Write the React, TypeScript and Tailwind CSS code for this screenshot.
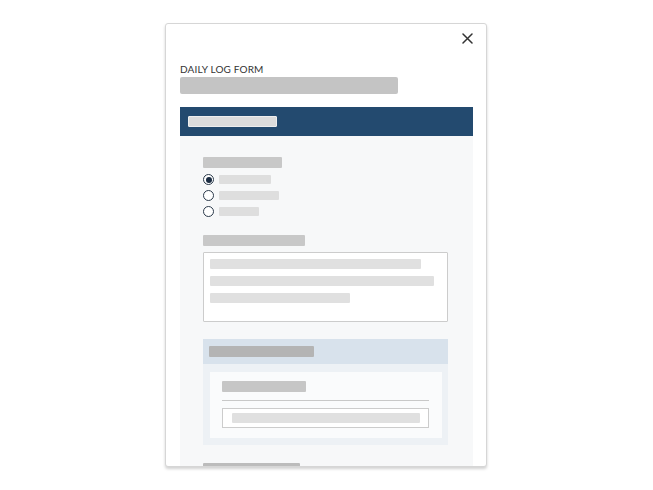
import React from "react";

function Bar({ w, h, c, cls = "" }: { w: string; h: string; c: string; cls?: string }) {
  return <div className={`${w} ${h} ${c} ${cls} rounded-[1px]`} />;
}

function Radio({ checked }: { checked?: boolean }) {
  return (
    <div className="w-[11px] h-[11px] rounded-full border border-[#2b3a4b] bg-white flex items-center justify-center shrink-0">
      {checked && <div className="w-[6px] h-[6px] rounded-full bg-[#1b2c42]" />}
    </div>
  );
}

export default function App() {
  return (
    <div className="w-[653px] h-[490px] bg-white pt-[23px] pl-[165px]" style={{ fontFamily: "Lato, 'Open Sans', sans-serif" }}>
      <div className="w-[322px] h-[444px] border border-[#d6d6d6] rounded-[3px] shadow-[0_2px_3px_rgba(0,0,0,0.18)] overflow-hidden bg-white pl-[14px] pr-[13px]">
        <div className="flex justify-end pt-[9px]">
          <svg width="11" height="11" viewBox="0 0 11 11">
            <path d="M1 1L10 10M10 1L1 10" stroke="#333" strokeWidth="1.5" strokeLinecap="round" />
          </svg>
        </div>
        <div className="mt-[19px] text-[10px] leading-[12px] tracking-[0.15px] text-[#333] font-normal">DAILY LOG FORM</div>
        <Bar w="w-[218px]" h="h-[17px]" c="bg-[#c4c4c4]" cls="mt-[2px] rounded-[2px]" />
        <div className="mt-[13px] h-[29px] bg-[#234a6f] flex items-center pl-[8px]">
          <div className="w-[89px] h-[11px] bg-[#dcdcdc] border border-[#eeeeee] rounded-[1px]" />
        </div>
        <div className="bg-[#f7f8f9] pl-[23px] pr-[26px] pt-[21px] h-[340px]">
          <Bar w="w-[79px]" h="h-[11px]" c="bg-[#c8c8c8]" />
          <div className="mt-[6px] flex flex-col gap-[5px]">
            <div className="flex items-center gap-[5px] h-[11px]">
              <Radio checked />
              <Bar w="w-[52px]" h="h-[9px]" c="bg-[#dedede]" />
            </div>
            <div className="flex items-center gap-[5px] h-[11px]">
              <Radio />
              <Bar w="w-[60px]" h="h-[9px]" c="bg-[#dedede]" />
            </div>
            <div className="flex items-center gap-[5px] h-[11px]">
              <Radio />
              <Bar w="w-[40px]" h="h-[9px]" c="bg-[#dedede]" />
            </div>
          </div>
          <Bar w="w-[102px]" h="h-[11px]" c="bg-[#c8c8c8]" cls="mt-[18px]" />
          <div className="mt-[6px] w-[245px] h-[70px] bg-white border border-[#cccccc] rounded-[1px] pl-[6px] pt-[6px] flex flex-col gap-[7px]">
            <Bar w="w-[211px]" h="h-[10px]" c="bg-[#e0e0e0]" />
            <Bar w="w-[224px]" h="h-[10px]" c="bg-[#e0e0e0]" />
            <Bar w="w-[140px]" h="h-[10px]" c="bg-[#e0e0e0]" />
          </div>
          <div className="mt-[17px] w-[245px]">
            <div className="h-[25px] bg-[#d8e2ec] flex items-center pl-[6px]">
              <Bar w="w-[105px]" h="h-[11px]" c="bg-[#b4b4b4]" />
            </div>
            <div className="bg-[#edf1f5] pt-[8px] pb-[7px] pl-[7px] pr-[6px]">
              <div className="bg-[#fafbfc] h-[66px] pl-[12px] pr-[13px] pt-[9px]">
                <Bar w="w-[84px]" h="h-[11px]" c="bg-[#c6c6c6]" />
                <div className="mt-[8px] h-px bg-[#c8c8c8]" />
                <div className="mt-[7px] h-[20px] bg-white border border-[#cccccc] flex items-center pl-[9px] pr-[8px]">
                  <Bar w="w-full" h="h-[10px]" c="bg-[#e0e0e0]" />
                </div>
              </div>
            </div>
          </div>
          <Bar w="w-[97px]" h="h-[11px]" c="bg-[#bcbcbc]" cls="mt-[18px]" />
        </div>
      </div>
    </div>
  );
}
